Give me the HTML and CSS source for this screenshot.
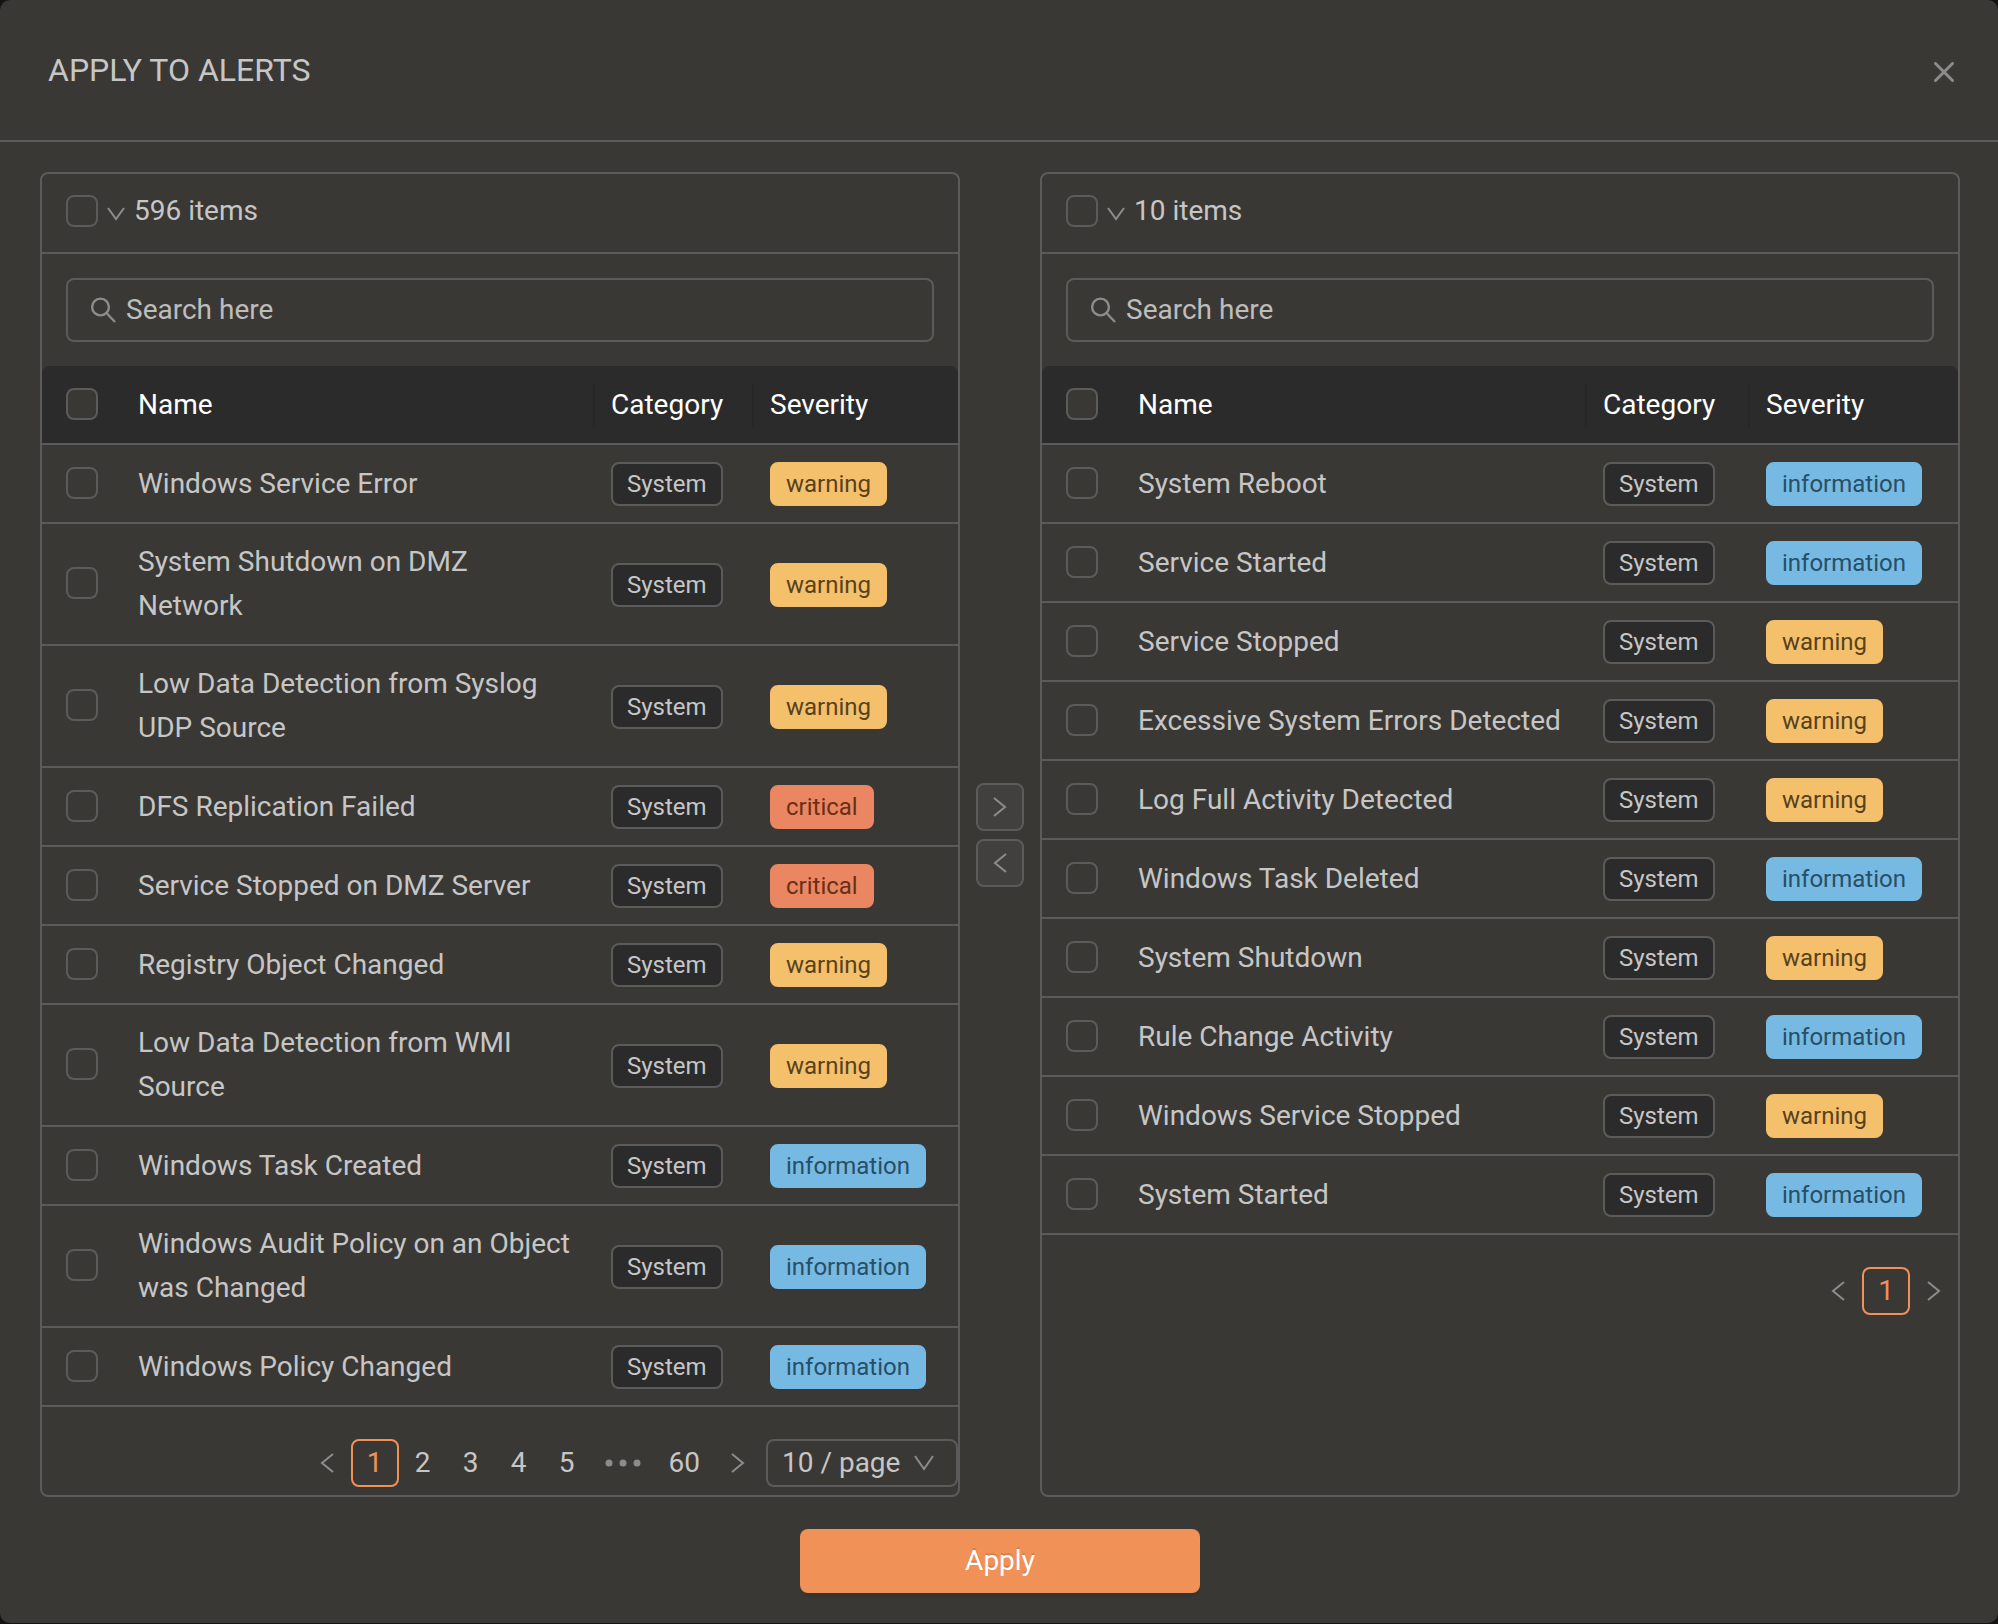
FILE: index.html
```html
<!DOCTYPE html>
<html lang="en">

<head>
    <meta charset="UTF-8">
    <meta name="viewport" content="width=device-width, initial-scale=1.0">
    <title>Apply to Alerts</title>
    <link rel="stylesheet" href="styles.css">
</head>

<body>
    <div class="modal" role="dialog" aria-labelledby="modalTitle">
        <header class="modal-header">
            <h1 id="modalTitle">APPLY TO ALERTS</h1>
            <button class="close" aria-label="Close">
                <svg width="20" height="20" viewBox="0 0 20 20"><path d="M1.5 1.5l17 17M18.5 1.5l-17 17" /></svg>
            </button>
        </header>

        <div class="modal-body">
            <div class="transfer">
                <section class="panel panel-source">
                    <div class="panel-header">
                        <input type="checkbox" id="sourceAll" aria-label="Select all available alerts">
                        <button class="dropdown" aria-label="Selection options">
                            <svg width="18" height="14" viewBox="0 0 18 14"><path d="M1 1l8 11 8-11" /></svg>
                        </button>
                        <label for="sourceAll">596 items</label>
                    </div>
                    <div class="search">
                        <svg width="26" height="26" viewBox="0 0 26 26"><circle cx="10.5" cy="10" r="8.4" /><path d="M16.5 16l8.5 9" /></svg>
                        <input type="text" placeholder="Search here" aria-label="Search available alerts">
                    </div>
                    <table>
                        <thead>
                            <tr>
                                <th class="col-check"><input type="checkbox" aria-label="Select page"></th>
                                <th class="col-name">Name</th>
                                <th class="col-category">Category</th>
                                <th class="col-severity">Severity</th>
                            </tr>
                        </thead>
                        <tbody id="sourceRows"></tbody>
                    </table>
                    <nav class="pagination" aria-label="Available alerts pages">
                        <button aria-label="Previous page">
                            <svg width="14" height="20" viewBox="0 0 14 20"><path d="M13 1L2 10l11 9" /></svg>
                        </button>
                        <button class="active">1</button>
                        <button>2</button>
                        <button>3</button>
                        <button>4</button>
                        <button>5</button>
                        <button class="jump" aria-label="Next 5 pages">
                            <svg width="36" height="8" viewBox="0 0 36 8"><circle cx="4" cy="4" r="3.5" /><circle cx="18" cy="4" r="3.5" /><circle cx="32" cy="4" r="3.5" /></svg>
                        </button>
                        <button>60</button>
                        <button aria-label="Next page">
                            <svg width="14" height="20" viewBox="0 0 14 20"><path d="M1 1l11 9-11 9" /></svg>
                        </button>
                        <div class="page-size">
                            <select aria-label="Page size">
                                <option>10 / page</option>
                                <option>20 / page</option>
                                <option>50 / page</option>
                            </select>
                            <svg width="20" height="16" viewBox="0 0 20 16"><path d="M1 1l9 13 9-13" /></svg>
                        </div>
                    </nav>
                </section>

                <div class="operations">
                    <button aria-label="Move to right">
                        <svg width="14" height="20" viewBox="0 0 14 20"><path d="M1 1l11 9-11 9" /></svg>
                    </button>
                    <button aria-label="Move to left">
                        <svg width="14" height="20" viewBox="0 0 14 20"><path d="M13 1L2 10l11 9" /></svg>
                    </button>
                </div>

                <section class="panel panel-target">
                    <div class="panel-header">
                        <input type="checkbox" id="targetAll" aria-label="Select all applied alerts">
                        <button class="dropdown" aria-label="Selection options">
                            <svg width="18" height="14" viewBox="0 0 18 14"><path d="M1 1l8 11 8-11" /></svg>
                        </button>
                        <label for="targetAll">10 items</label>
                    </div>
                    <div class="search">
                        <svg width="26" height="26" viewBox="0 0 26 26"><circle cx="10.5" cy="10" r="8.4" /><path d="M16.5 16l8.5 9" /></svg>
                        <input type="text" placeholder="Search here" aria-label="Search applied alerts">
                    </div>
                    <table>
                        <thead>
                            <tr>
                                <th class="col-check"><input type="checkbox" aria-label="Select page"></th>
                                <th class="col-name">Name</th>
                                <th class="col-category">Category</th>
                                <th class="col-severity">Severity</th>
                            </tr>
                        </thead>
                        <tbody id="targetRows"></tbody>
                    </table>
                    <nav class="pagination" aria-label="Applied alerts pages">
                        <button aria-label="Previous page">
                            <svg width="14" height="20" viewBox="0 0 14 20"><path d="M13 1L2 10l11 9" /></svg>
                        </button>
                        <button class="active">1</button>
                        <button aria-label="Next page">
                            <svg width="14" height="20" viewBox="0 0 14 20"><path d="M1 1l11 9-11 9" /></svg>
                        </button>
                    </nav>
                </section>
            </div>

            <button class="apply">Apply</button>
        </div>
    </div>

    <script>
        const sourceAlerts = [
            ['Windows Service Error', 'warning'],
            ['System Shutdown on DMZ Network', 'warning'],
            ['Low Data Detection from Syslog UDP Source', 'warning'],
            ['DFS Replication Failed', 'critical'],
            ['Service Stopped on DMZ Server', 'critical'],
            ['Registry Object Changed', 'warning'],
            ['Low Data Detection from WMI Source', 'warning'],
            ['Windows Task Created', 'information'],
            ['Windows Audit Policy on an Object was Changed', 'information'],
            ['Windows Policy Changed', 'information']
        ];

        const targetAlerts = [
            ['System Reboot', 'information'],
            ['Service Started', 'information'],
            ['Service Stopped', 'warning'],
            ['Excessive System Errors Detected', 'warning'],
            ['Log Full Activity Detected', 'warning'],
            ['Windows Task Deleted', 'information'],
            ['System Shutdown', 'warning'],
            ['Rule Change Activity', 'information'],
            ['Windows Service Stopped', 'warning'],
            ['System Started', 'information']
        ];

        function renderRows(id, alerts) {
            document.getElementById(id).innerHTML = alerts.map(([name, severity], i) => `
                <tr>
                    <td><input type="checkbox" id="${id}${i}"></td>
                    <td><label for="${id}${i}">${name}</label></td>
                    <td><span class="tag">System</span></td>
                    <td><span class="tag ${severity}">${severity}</span></td>
                </tr>
            `).join('');
        }

        renderRows('sourceRows', sourceAlerts);
        renderRows('targetRows', targetAlerts);
    </script>
</body>

</html>
```
FILE: styles.css
```css
* {
    box-sizing: border-box;
}

body {
    margin: 0;
    background-color: #141414;
    color: #c6c6c6;
    font-family: Roboto, "Liberation Sans", sans-serif;
    font-size: 28px;
    line-height: 44px;
}

button,
input,
select {
    margin: 0;
    padding: 0;
    border: none;
    background: none;
    color: inherit;
    font: inherit;
}

button {
    display: flex;
    align-items: center;
    justify-content: center;
    cursor: pointer;
}

svg {
    display: block;
    flex: none;
    fill: none;
    stroke: #8c8c8c;
    stroke-width: 2;
}

input[type="checkbox"] {
    appearance: none;
    display: block;
    flex: none;
    width: 32px;
    height: 32px;
    border: 2px solid #5b5b5c;
    border-radius: 8px;
    background-color: #3a3834;
}

input[type="checkbox"]:checked {
    background-color: #f09157;
}

.modal {
    border-radius: 10px;
    background-color: #3a3834;
}

.modal-header {
    display: flex;
    align-items: center;
    justify-content: space-between;
    height: 142px;
    padding: 0 44px 0 48px;
    border-bottom: 2px solid #5b5b5c;
}

h1 {
    margin: 0;
    font-size: 32px;
    font-weight: 400;
}

.close {
    padding-top: 4px;
}

.close svg {
    stroke-width: 3;
    stroke-linecap: round;
}

.modal-body {
    padding: 30px 38px 30px 40px;
}

.transfer {
    display: flex;
    gap: 16px;
}

.panel {
    flex: 1;
    min-width: 0;
    padding-bottom: 8px;
    border: 2px solid #5b5b5c;
    border-radius: 8px;
}

.panel-header {
    display: flex;
    align-items: center;
    height: 80px;
    padding: 0 24px 4px;
    border-bottom: 2px solid #5b5b5c;
}

.dropdown {
    padding-top: 6px;
    margin: 0 9px;
}

.search {
    display: flex;
    align-items: center;
    gap: 10px;
    height: 64px;
    margin: 24px;
    padding: 0 22px;
    border: 2px solid #5b5b5c;
    border-radius: 8px;
}

.search svg {
    stroke-width: 2.4;
}

.search input {
    flex: 1;
    min-width: 0;
    outline: none;
}

.search input::placeholder {
    color: #bdbdbd;
    opacity: 1;
}

table {
    width: 100%;
    table-layout: fixed;
    border-collapse: separate;
    border-spacing: 0;
}

th,
td {
    height: 79px;
    padding: 16px;
    border-bottom: 2px solid #5b5b5c;
    text-align: left;
    vertical-align: middle;
}

th {
    background-color: #2b2b2b;
    color: #fff;
    font-weight: 400;
}

th:first-child {
    border-top-left-radius: 8px;
}

th:last-child {
    border-top-right-radius: 8px;
}

th:first-child,
td:first-child {
    padding: 0 24px 2px;
}

.col-check {
    width: 80px;
}

/* faint divider between header cells */
.col-name,
.col-category {
    background-image: linear-gradient(#272727, #272727);
    background-position: right center;
    background-repeat: no-repeat;
    background-size: 2px 44px;
}

.panel-source .col-category {
    width: 159px;
}

.panel-source .col-severity {
    width: 204px;
}

.panel-target .col-category {
    width: 163px;
}

.panel-target .col-severity {
    width: 208px;
}

.tag {
    display: block;
    width: fit-content;
    margin-top: 1px;
    padding: 0 14px;
    border: 2px solid #5b5b5c;
    border-radius: 8px;
    background-color: #2b2b2b;
    font-size: 24px;
    line-height: 40px;
}

.warning {
    border-color: #f5c06c;
    background-color: #f5c06c;
    color: #57421c;
}

.critical {
    border-color: #ea8762;
    background-color: #ea8762;
    color: #6b2f18;
}

.information {
    border-color: #76bae3;
    background-color: #76bae3;
    color: #274f66;
}

.pagination {
    display: flex;
    justify-content: flex-end;
    margin-top: 32px;
}

.pagination button {
    min-width: 48px;
    height: 48px;
    padding: 0 12px;
    border: 2px solid transparent;
    border-radius: 8px;
}

.pagination .active {
    border-color: #f09157;
    color: #f09157;
}

.pagination .jump {
    width: 64px;
}

.jump svg {
    fill: #8c8c8c;
    stroke: none;
}

.page-size {
    display: grid;
    align-items: center;
    width: 192px;
    margin-left: 4px;
}

.page-size select,
.page-size svg {
    grid-area: 1 / 1;
}

.page-size select {
    appearance: none;
    width: 100%;
    height: 48px;
    padding: 0 16px 0 14px;
    border: 2px solid #5b5b5c;
    border-radius: 8px;
}

.page-size svg {
    justify-self: end;
    margin-right: 24px;
    pointer-events: none;
}

.operations {
    display: flex;
    flex-direction: column;
    justify-content: center;
    gap: 8px;
}

.operations button {
    width: 48px;
    height: 48px;
    border: 2px solid #5b5b5c;
    border-radius: 8px;
    background-color: #41403c;
}

.apply {
    width: 400px;
    max-width: 100%;
    height: 64px;
    margin: 32px auto 0;
    border-radius: 8px;
    background-color: #f09157;
    box-shadow: 0 4px 0 rgba(0, 0, 0, 0.05);
    color: #fff;
    text-shadow: 0 -2px 0 rgba(0, 0, 0, 0.12);
}
```
